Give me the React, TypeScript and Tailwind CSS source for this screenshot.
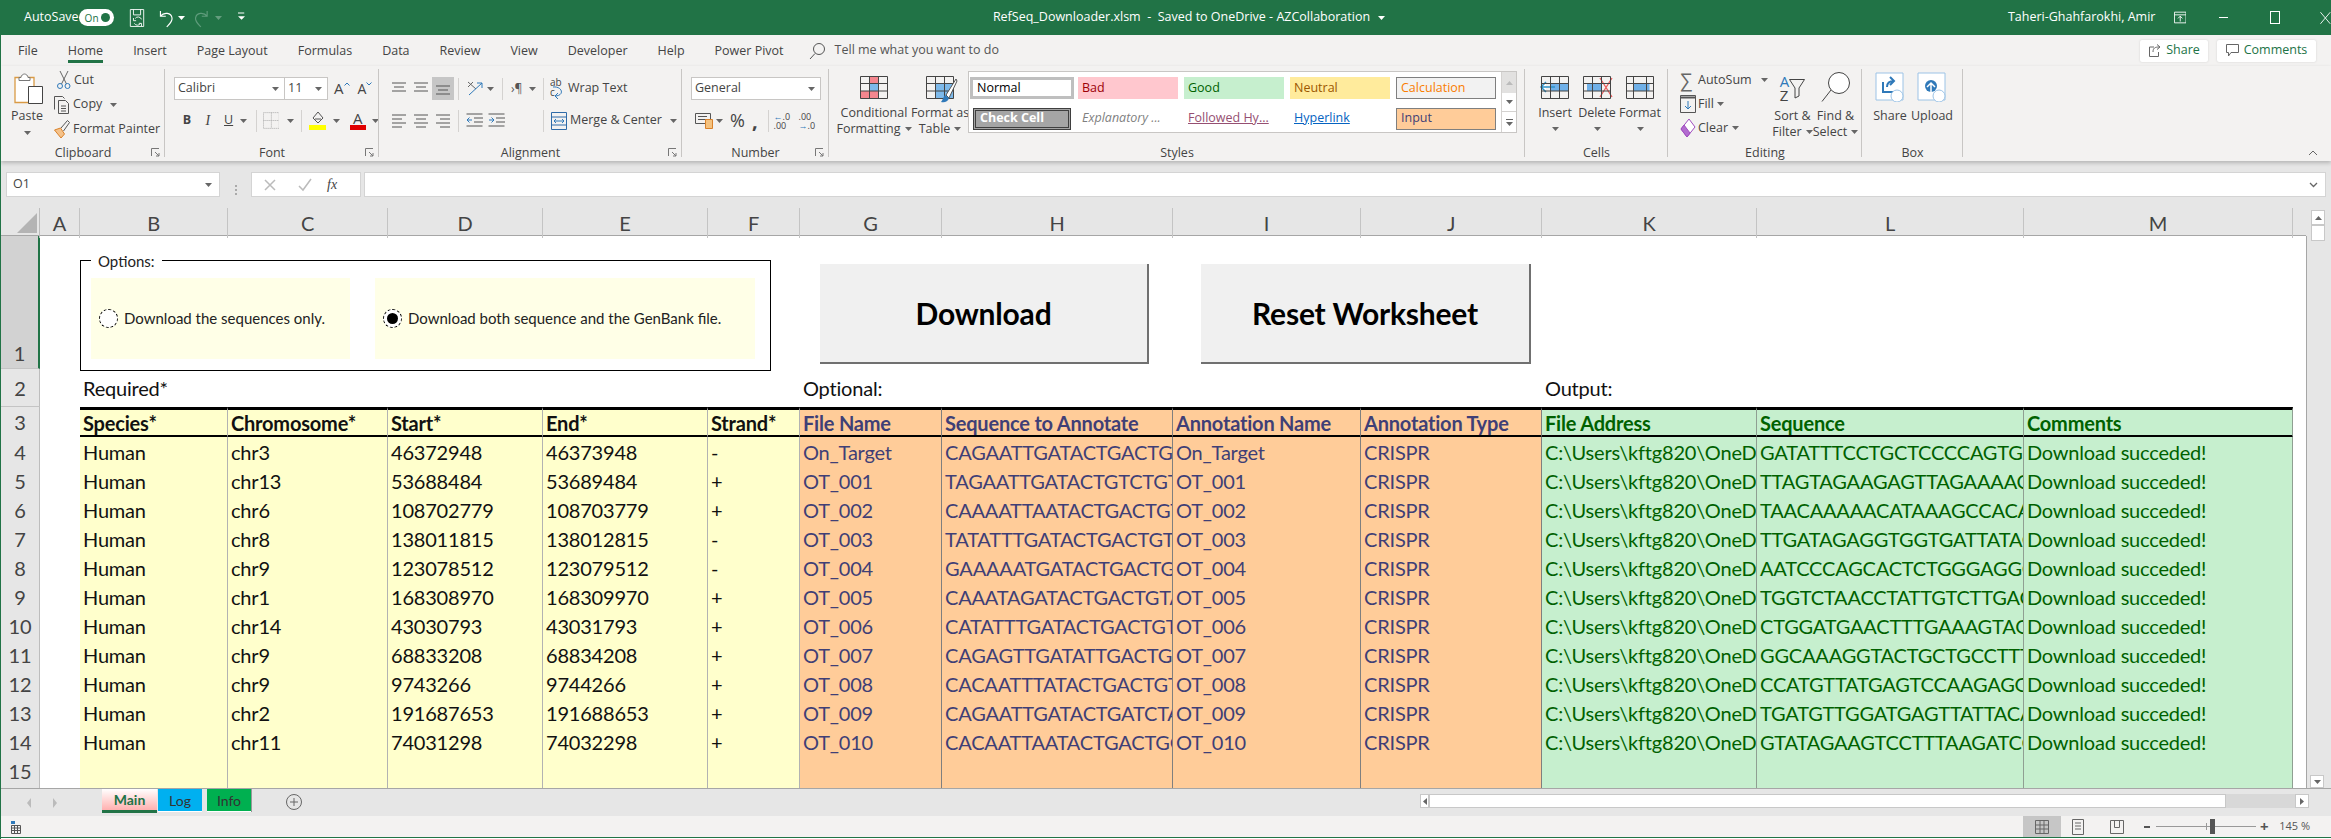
import type { ReactNode } from "react";

const gridCols =
  "grid grid-cols-[39px_40px_148px_160px_155px_165px_92px_142px_231px_188px_181px_215px_267px_269px_13px]";

const colHeaders = ["A", "B", "C", "D", "E", "F", "G", "H", "I", "J", "K", "L", "M"];

const path = "C:\\Users\\kftg820\\OneDrive\\Documents\\RefSeq";
const ok = "Download succeded!";

const rows = [
  ["chr3", "46372948", "46373948", "-", "On_Target", "CAGAATTGATACTGACTGTAG", "CRISPR", "GATATTTCCTGCTCCCCAGTGGATG"],
  ["chr13", "53688484", "53689484", "+", "OT_001", "TAGAATTGATACTGTCTGTAG", "CRISPR", "TTAGTAGAAGAGTTAGAAAACTTAA"],
  ["chr6", "108702779", "108703779", "+", "OT_002", "CAAAATTAATACTGACTGTAG", "CRISPR", "TAACAAAAACATAAAGCCACAGATT"],
  ["chr8", "138011815", "138012815", "-", "OT_003", "TATATTTGATACTGACTGTA", "CRISPR", "TTGATAGAGGTGGTGATTATAGATT"],
  ["chr9", "123078512", "123079512", "-", "OT_004", "GAAAAATGATACTGACTGTAG", "CRISPR", "AATCCCAGCACTCTGGGAGGCTGAG"],
  ["chr1", "168308970", "168309970", "+", "OT_005", "CAAATAGATACTGACTGTAGG", "CRISPR", "TGGTCTAACCTATTGTCTTGACTTT"],
  ["chr14", "43030793", "43031793", "+", "OT_006", "CATATTTGATACTGACTGTA", "CRISPR", "CTGGATGAACTTTGAAAGTAGTAAT"],
  ["chr9", "68833208", "68834208", "+", "OT_007", "CAGAGTTGATATTGACTGGAG", "CRISPR", "GGCAAAGGTACTGCTGCCTTTTAAG"],
  ["chr9", "9743266", "9744266", "+", "OT_008", "CACAATTTATACTGACTGTA", "CRISPR", "CCATGTTATGAGTCCAAGAGGGCAG"],
  ["chr2", "191687653", "191688653", "+", "OT_009", "CAGAATTGATACTGATCTAGG", "CRISPR", "TGATGTTGGATGAGTTATTACACTT"],
  ["chr11", "74031298", "74032298", "+", "OT_010", "CACAATTAATACTGACTGCA", "CRISPR", "GTATAGAAGTCCTTTAAGATCCAGT"],
];

const yellowCell = "bg-[#ffffcc] border-[#b2b2b2] text-[#111]";
const orangeCell = "bg-[#ffcc99] border-[#7f7f7f] text-[#3f3f76]";
const greenCell = "bg-[#c6efce] border-[#8f9f92] text-[#006100]";

const Caret = ({ className = "" }: { className?: string }) => (
  <svg width="7" height="4" viewBox="0 0 7 4" className={`shrink-0 ${className}`}>
    <path d="M0 0h7L3.5 4z" fill="#666" />
  </svg>
);

const Launcher = () => (
  <svg width="9" height="9" viewBox="0 0 9 9" className="absolute right-[5px] bottom-[4px]" fill="none" stroke="#777">
    <path d="M.5 8V.5H8M4 4l4 4M8 5v3H5" />
  </svg>
);

const Group = ({
  className,
  label,
  launcher,
  children,
}: {
  className: string;
  label: string;
  launcher?: boolean;
  children: ReactNode;
}) => (
  <div className={`relative flex h-full shrink-0 flex-col ${className}`}>
    <div className="flex-1">{children}</div>
    <div className="h-[16px] text-center leading-[16px]">{label}</div>
    {launcher && <Launcher />}
    <div className="absolute top-[3px] right-0 bottom-[4px] w-px bg-[#c8c6c4]" />
  </div>
);

const Sep = ({ className = "" }: { className?: string }) => (
  <div className={`h-[22px] w-px shrink-0 bg-[#d4d2d0] ${className}`} />
);

const Lines = ({ align }: { align: "top" | "middle" | "bottom" | "left" | "center" | "right" }) => {
  const p = {
    top: "M2 3h14M4 7h10M2 11h14",
    middle: "M2 6h14M4 10h10M2 14h14",
    bottom: "M2 9h14M4 13h10M2 17h14",
    left: "M2 3h14M2 7h10M2 11h14M2 15h10",
    center: "M2 3h14M4 7h10M2 11h14M4 15h10",
    right: "M2 3h14M6 7h10M2 11h14M6 15h10",
  }[align];
  return (
    <svg width="18" height="18" viewBox="0 0 18 18" className="shrink-0" fill="none" stroke="#555">
      <path d={p} />
    </svg>
  );
};

const GridIcon = ({ children }: { children?: ReactNode }) => (
  <svg width="32" height="23" viewBox="0 0 32 23" fill="none" className="shrink-0">
    {children}
    <path d="M2.500 .5h27v22h-27zM11.500 .5v22M20.500 .5v22M2.500 7.500h27M2.500 15h27" stroke="#444" />
  </svg>
);

const TallLabel = ({ line1, line2, caret }: { line1: string; line2: string; caret?: boolean }) => (
  <div className="mt-[6px] flex flex-col items-center leading-[16px] whitespace-nowrap">
    <span>{line1}</span>
    <span className="flex items-center gap-[4px]">
      {line2}
      {caret && <Caret />}
    </span>
  </div>
);

const TitleBar = () => (
  <div className="flex h-[35px] shrink-0 items-center bg-[#217346] text-[12.5px] text-white">
    <span className="ml-[23px] w-[57px]">AutoSave</span>
    <div className="flex h-[17px] w-[38px] items-center justify-between rounded-full bg-white pr-[4px] pl-[6px] text-[10px] leading-none text-[#217346]">
      On
      <span className="h-[9px] w-[9px] rounded-full bg-[#217346]" />
    </div>
    <svg width="18" height="22" viewBox="0 0 18 22" fill="none" stroke="#fff" className="ml-[15px]">
      <path d="M1.500 20.500v-19h15v19zM5 1.500v6h8v-6M14 12.500a4 4 0 0 0-7-1M5 11v3h3M6 17a4 4 0 0 0 7 0M14 20v-3h-3" />
    </svg>
    <svg width="22" height="22" viewBox="0 0 22 22" fill="none" stroke="#fff" strokeWidth="1.300" className="ml-[11px]">
      <path d="M5 3v6h6M5 9c4-5 12-4 13 2 .6 4-3 7-6 10" />
    </svg>
    <Caret className="ml-[3px] [&>path]:fill-white" />
    <svg width="22" height="22" viewBox="0 0 22 22" fill="none" stroke="#5f9c7c" strokeWidth="1.300" className="ml-[7px]">
      <path d="M17 3v6h-6M17 9C13 4 5 5 4 11c-.6 4 3 7 6 10" />
    </svg>
    <Caret className="ml-[3px] opacity-30 [&>path]:fill-white" />
    <svg width="8" height="11" viewBox="0 0 8 11" className="ml-[16px]" fill="#fff">
      <path d="M0 0h7v1H0zM0 4h8L4 8z" />
      <path d="M0 9h8v1H0z" opacity="0" />
    </svg>
    <div className="ml-[748px] flex w-[344px] items-center whitespace-pre">
      RefSeq_Downloader.xlsm  -  Saved to OneDrive - AZCollaboration
      <Caret className="ml-[8px] [&>path]:fill-white" />
    </div>
    <span className="ml-[671px] w-[134px] whitespace-nowrap">Taheri-Ghahfarokhi, Amir</span>
    <svg width="14" height="13" viewBox="0 0 14 13" fill="none" stroke="#fff" className="ml-[32px]">
      <path d="M.5 .5h13v12H.5zM.5 3.500h13M7 11V5M4.500 7.500 7 5l2.500 2.500" />
    </svg>
    <div className="ml-[33px] h-px w-[10px] bg-white" />
    <div className="ml-[42px] h-[13px] w-[11px] border border-white" />
    <svg width="12" height="14" viewBox="0 0 12 14" stroke="#fff" className="ml-[40px]">
      <path d="M.5 .5l11 13M11.500 .5l-11 13" />
    </svg>
  </div>
);

const tabs = ["File", "Home", "Insert", "Page Layout", "Formulas", "Data", "Review", "View", "Developer", "Help", "Power Pivot"];

const TabBar = () => (
  <div className="flex h-[31px] shrink-0 items-center bg-[#f3f2f1] text-[#444]">
    <div className="ml-[17px] flex items-center gap-[30px]">
      {tabs.map((t) => (
        <div key={t} className="relative whitespace-nowrap leading-[31px]">
          {t}
          {t === "Home" && <div className="absolute right-0 bottom-[3px] left-0 h-[3px] bg-[#217346]" />}
        </div>
      ))}
    </div>
    <svg width="18" height="18" viewBox="0 0 18 18" fill="none" stroke="#555" className="ml-[24px]">
      <circle cx="11" cy="7" r="5.500" />
      <path d="M7 11.500 2 17" />
    </svg>
    <span className="ml-[9px] whitespace-nowrap text-[#555]">Tell me what you want to do</span>
    <div className="ml-auto flex h-[22px] w-[68px] items-center justify-center gap-[5px] rounded-[2px] bg-white text-[#217346] shadow-[0_0_2px_#ccc]">
      <svg width="13" height="15" viewBox="0 0 13 15" fill="none" stroke="#666">
        <path d="M6 4H1.500v9.500h9V9M5 9c0-4 2-5 6-5M9 1.500 12 4 9 6.500" />
      </svg>
      Share
    </div>
    <div className="mr-[15px] ml-[9px] flex h-[22px] w-[99px] items-center justify-center gap-[5px] rounded-[2px] bg-white text-[#217346] shadow-[0_0_2px_#ccc]">
      <svg width="13" height="13" viewBox="0 0 13 13" fill="none" stroke="#666">
        <path d="M.5 .5h12v8H5L2.500 12V8.500h-2z" />
      </svg>
      Comments
    </div>
  </div>
);

const Clipboard = () => (
  <Group className="w-[164px]" label="Clipboard" launcher>
    <div className="flex">
      <div className="flex w-[52px] flex-col items-center">
        <svg width="30" height="32" viewBox="0 0 30 32" fill="none" className="mt-[7px] ml-[3px]">
          <path d="M1 4.500h19v25H1z" fill="#fff" stroke="#d99a45" strokeWidth="1.300" />
          <path d="M7 4.500c0-2 2-3.500 3.500-3.500S14 2.500 14 4.500h2v3H5v-3z" fill="#fff" stroke="#777" />
          <path d="M14.500 13.500h14v17h-14z" fill="#fff" stroke="#444" />
        </svg>
        <span className="mt-[3px] leading-[16px]">Paste</span>
        <Caret className="mt-[7px]" />
      </div>
      <div className="flex flex-col pt-[2px]">
        <div className="flex h-[24px] items-center">
          <svg width="18" height="20" viewBox="0 0 18 20" fill="none" className="ml-[2px]">
            <path d="M5 1l6.500 13M13 1 6.500 14" stroke="#666" />
            <circle cx="5" cy="16" r="2.500" stroke="#2f79b9" />
            <circle cx="12.500" cy="16" r="2.500" stroke="#2f79b9" />
          </svg>
          <span className="ml-[1px]">Cut</span>
        </div>
        <div className="flex h-[25px] items-center">
          <svg width="17" height="18" viewBox="0 0 17 18" fill="none" stroke="#555">
            <path d="M1.500 13.500v-13h8l2 2M5.500 4.500h7l3 3v10h-10z" fill="#f3f2f1" />
            <path d="M8 10h5M8 12.500h5M8 15h5" />
          </svg>
          <span className="ml-[3px]">Copy</span>
          <Caret className="ml-[8px]" />
        </div>
        <div className="flex h-[24px] items-center">
          <svg width="17" height="20" viewBox="0 0 17 20" fill="none">
            <path d="M1.500 11 8 19l3.500-4-4-6z" fill="#f5c28a" stroke="#d9822b" />
            <path d="M8 9l6.500-7.500 2 2L10.500 12" stroke="#555" />
          </svg>
          <span className="ml-[3px] whitespace-nowrap">Format Painter</span>
        </div>
      </div>
    </div>
  </Group>
);

const FontGroup = () => (
  <Group className="w-[214px]" label="Font" launcher>
    <div className="flex h-[23px] mt-[11px] pl-[9px]">
      <div className="flex w-[111px] items-center justify-between border border-[#c8c6c4] bg-white pr-[5px] pl-[3px]">
        Calibri
        <Caret />
      </div>
      <div className="flex w-[43px] items-center justify-between border border-l-0 border-[#c8c6c4] bg-white pr-[5px] pl-[3px]">
        11
        <Caret />
      </div>
      <span className="ml-[6px] text-[15px] leading-[23px]">A</span>
      <svg width="6" height="4" viewBox="0 0 6 4" className="mt-[5px]" fill="none" stroke="#2f79b9">
        <path d="M.5 3.500 3 1l2.500 2.500" />
      </svg>
      <span className="ml-[8px] text-[14px] leading-[23px]">A</span>
      <svg width="6" height="4" viewBox="0 0 6 4" className="mt-[5px]" fill="none" stroke="#2f79b9">
        <path d="M.5 .5 3 3l2.500-2.500" />
      </svg>
    </div>
    <div className="mt-[9px] flex h-[23px] items-center pl-[16px]">
      <span className="w-[12px] text-center font-bold">B</span>
      <span className="ml-[10px] w-[10px] text-center font-['Liberation_Serif'] text-[14px] italic">I</span>
      <span className="ml-[10px] w-[12px] text-center underline">U</span>
      <Caret className="ml-[5px]" />
      <Sep className="ml-[9px]" />
      <svg width="17" height="17" viewBox="0 0 17 17" fill="none" stroke="#aaa" strokeDasharray="1 1" className="ml-[6px]">
        <path d="M.5 .5h16v16H.500zM8.500 .5v16M.5 8.500h16" />
      </svg>
      <Caret className="ml-[8px]" />
      <Sep className="ml-[7px]" />
      <div className="ml-[7px] flex w-[17px] flex-col items-center">
        <svg width="14" height="14" viewBox="0 0 14 14" fill="none" stroke="#555">
          <path d="M7 1 2 7l5 5 5-5zM4 8h6" />
        </svg>
        <div className="h-[5px] w-[17px] bg-[#ffff00]" />
      </div>
      <Caret className="ml-[7px]" />
      <div className="ml-[9px] flex w-[17px] flex-col items-center leading-none">
        <span className="text-[15px] leading-[14px]">A</span>
        <div className="h-[5px] w-[16px] bg-[#e00000]" />
      </div>
      <Caret className="ml-[6px]" />
    </div>
  </Group>
);

const AlignmentGroup = () => (
  <Group className="w-[303px]" label="Alignment" launcher>
    <div className="mt-[11px] flex h-[23px] items-center pl-[11px]">
      <Lines align="top" />
      <div className="ml-[4px]"><Lines align="top" /></div>
      <div className="ml-[2px] flex h-[23px] w-[22px] items-center justify-center bg-[#c6c6c6]"><Lines align="middle" /></div>
      <Sep className="ml-[4px]" />
      <svg width="18" height="18" viewBox="0 0 18 18" fill="none" className="ml-[7px]">
        <path d="M2 2l8 7M7 2 2 7" stroke="#666" />
        <path d="M3 15 16 3M11 3h5v5" stroke="#2f79b9" />
      </svg>
      <Caret className="ml-[3px]" />
      <Sep className="ml-[8px]" />
      <span className="ml-[8px] w-[14px] text-[12px] text-[#555]">›¶</span>
      <Caret className="ml-[4px]" />
      <Sep className="ml-[7px]" />
      <svg width="16" height="22" viewBox="0 0 16 22" fill="none" className="ml-[6px]">
        <path d="M3 9c9-1 12 8 3 9M8 15l-3 3 3 3" stroke="#2f79b9" />
        <text x="0" y="8" fontSize="10" fill="#444">ab</text>
        <text x="0" y="18" fontSize="10" fill="#444">c</text>
      </svg>
      <span className="ml-[2px] whitespace-nowrap">Wrap Text</span>
    </div>
    <div className="mt-[9px] flex h-[23px] items-center pl-[11px]">
      <Lines align="left" />
      <div className="ml-[4px]"><Lines align="center" /></div>
      <div className="ml-[4px]"><Lines align="right" /></div>
      <Sep className="ml-[6px]" />
      <svg width="17" height="15" viewBox="0 0 17 15" fill="none" className="ml-[7px]">
        <path d="M.5 1h16M8 5h9M8 9h9M.5 13h16" stroke="#555" />
        <path d="M6 7H1M3.500 4.500 1 7l2.500 2.500" stroke="#2f79b9" />
      </svg>
      <svg width="17" height="15" viewBox="0 0 17 15" fill="none" className="ml-[5px]">
        <path d="M.5 1h16M8 5h9M8 9h9M.5 13h16" stroke="#555" />
        <path d="M1 7h5M3.500 4.500 6 7 3.500 9.500" stroke="#2f79b9" />
      </svg>
      <Sep className="ml-[38px]" />
      <svg width="16" height="18" viewBox="0 0 16 18" fill="none" className="ml-[7px]">
        <path d="M.5 .5h15v17H.5zM.5 5h15M.5 13h15" stroke="#2f6ba8" />
        <path d="M3 9h10M5 7 3 9l2 2M11 7l2 2-2 2" stroke="#2f79b9" />
      </svg>
      <span className="ml-[3px] whitespace-nowrap">Merge &amp; Center</span>
      <Caret className="ml-[8px]" />
    </div>
  </Group>
);

const NumberGroup = () => (
  <Group className="w-[147px]" label="Number" launcher>
    <div className="mt-[11px] ml-[9px] flex h-[23px] w-[130px] items-center justify-between border border-[#c8c6c4] bg-white pr-[5px] pl-[3px]">
      General
      <Caret />
    </div>
    <div className="mt-[9px] flex h-[23px] items-center pl-[13px]">
      <svg width="18" height="17" viewBox="0 0 18 17" fill="none">
        <path d="M.5 1.500h15v10H.5z" stroke="#555" />
        <path d="M3 4.500h9M3 7.500h9" stroke="#555" />
        <path d="M10.500 7.500h7v9h-7z" fill="#f4c27f" stroke="#d9822b" />
      </svg>
      <Caret className="ml-[3px]" />
      <span className="ml-[7px] text-[18px]">%</span>
      <span className="ml-[7px] text-[20px] leading-[16px] font-bold">,</span>
      <Sep className="ml-[10px]" />
      <div className="ml-[5px] w-[20px] text-[9px] leading-[9px] whitespace-pre">
        <span className="text-[#2f79b9]">←</span>.0{"\n"}.00
      </div>
      <div className="ml-[5px] w-[20px] text-[9px] leading-[9px] whitespace-pre">
        .00{"\n"}<span className="text-[#2f79b9]">→</span>.0
      </div>
    </div>
  </Group>
);

const styleCells = [
  { label: "Normal", cls: "bg-white text-black border-[3px] border-[#bfbfbf] w-[104px]" },
  { label: "Bad", cls: "bg-[#ffc7ce] text-[#9c0006]" },
  { label: "Good", cls: "bg-[#c6efce] text-[#006100]" },
  { label: "Neutral", cls: "bg-[#ffeb9c] text-[#9c5700]" },
  { label: "Calculation", cls: "bg-[#f2f2f2] text-[#fa7d00] border border-[#7f7f7f]" },
  { label: "Check Cell", cls: "bg-[#a5a5a5] text-white font-bold border-[3px] border-double border-[#3f3f3f] ml-[3px] w-[98px]" },
  { label: "Explanatory ...", cls: "bg-white text-[#7f7f7f] italic" },
  { label: "Followed Hy...", cls: "bg-white text-[#954f72]", link: true },
  { label: "Hyperlink", cls: "bg-white text-[#0563c1]", link: true },
  { label: "Input", cls: "bg-[#ffcc99] text-[#3f3f76] border border-[#7f7f7f]" },
];

const StylesGroup = () => (
  <Group className="w-[696px]" label="Styles">
    <div className="flex">
      <div className="flex w-[83px] shrink-0 flex-col items-center pt-[10px] pl-[7px]">
        <GridIcon>
          <path d="M11.500 0h9v7.500h-9zM2.500 15h9v8h-9zM11.500 15h9v8h-9z" fill="#f4868e" />
          <path d="M11.500 7.500h9V15h-9z" fill="#7db9ea" />
        </GridIcon>
        <TallLabel line1="Conditional" line2="Formatting" caret />
      </div>
      <div className="flex w-[56px] shrink-0 flex-col items-center pt-[10px]">
        <div className="relative">
          <GridIcon>
            <path d="M11.500 7.500h18V23h-18z" fill="#7db9ea" />
          </GridIcon>
          <svg width="18" height="26" viewBox="0 0 18 26" fill="none" className="absolute top-[2px] right-[-2px]">
            <path d="M16 1 6 17l3 3L17 3z" fill="#fff" stroke="#555" />
            <path d="M5 17l4 3c-1 4-5 5-8 4 2-2 2-5 4-7z" fill="#2f79b9" />
          </svg>
        </div>
        <TallLabel line1="Format as" line2="Table" caret />
      </div>
      <div className="mt-[5px] flex h-[62px] shrink-0 border border-[#c8c6c4] bg-white pl-[1px]">
        <div className="grid w-[531px] grid-cols-[102px_100px_100px_100px_100px] gap-x-[6px] gap-y-[6px] pt-[5px]">
          {styleCells.map((c) => (
            <div key={c.label} className={`flex h-[22px] items-center pl-[4px] whitespace-nowrap ${c.cls}`}>
              <span className={c.link ? "underline" : ""}>{c.label}</span>
            </div>
          ))}
        </div>
        <div className="flex w-[15px] flex-col border-l border-[#d4d2d0]">
          <div className="flex h-[21px] items-center justify-center bg-[#e2e1e0]">
            <svg width="7" height="4" viewBox="0 0 7 4"><path d="M0 4h7L3.500 0z" fill="#bbb" /></svg>
          </div>
          <div className="flex h-[19px] items-center justify-center border-b border-[#d4d2d0]"><Caret /></div>
          <div className="flex flex-1 flex-col items-center justify-center gap-[2px]">
            <div className="h-px w-[7px] bg-[#666]" />
            <Caret />
          </div>
        </div>
      </div>
    </div>
  </Group>
);

const CellsGroup = () => (
  <Group className="w-[143px]" label="Cells">
    <div className="flex pt-[10px] pl-[9px]">
      <div className="flex w-[42px] flex-col items-center">
        <GridIcon>
          <path d="M11.500 7.500h18V15h-18z" fill="#6fb0e8" />
          <path d="M16 11H2M7 6l-5 5 5 5" stroke="#2f93c9" strokeWidth="1.500" fill="#fff" />
        </GridIcon>
        <span className="mt-[6px] leading-[16px]">Insert</span>
        <Caret className="mt-[6px]" />
      </div>
      <div className="flex w-[42px] flex-col items-center">
        <GridIcon>
          <path d="M6 7.500h14V15H6z" fill="#6fb0e8" />
          <path d="M19 2l12 19M31 2 19 21" stroke="#ea5b5b" strokeWidth="1.300" />
        </GridIcon>
        <span className="mt-[6px] leading-[16px]">Delete</span>
        <Caret className="mt-[6px]" />
      </div>
      <div className="flex w-[44px] flex-col items-center">
        <svg width="32" height="23" viewBox="0 0 32 23" fill="none">
          <path d="M9.500 7.500h16V15h-16z" fill="#6fb0e8" />
          <path d="M2.500 .5h27v22h-27zM9.500 .5v22M22.500 .5v22M2.500 7.500h27M2.500 15h27" stroke="#444" />
        </svg>
        <span className="mt-[6px] leading-[16px]">Format</span>
        <Caret className="mt-[6px]" />
      </div>
    </div>
  </Group>
);

const EditingGroup = () => (
  <Group className="w-[194px]" label="Editing">
    <div className="flex">
      <div className="flex w-[103px] shrink-0 flex-col pt-[2px] pl-[12px]">
        <div className="flex h-[24px] items-center">
          <span className="w-[18px] text-[19px] leading-none text-[#666]">∑</span>
          <span className="whitespace-nowrap">AutoSum</span>
          <Caret className="ml-[9px]" />
        </div>
        <div className="flex h-[24px] items-center">
          <svg width="16" height="20" viewBox="0 0 16 20" fill="none" className="mr-[2px]">
            <path d="M.5 1.500h15v17H.5z" stroke="#555" />
            <path d="M.5 3.500h15" stroke="#555" strokeWidth="2" />
            <path d="M8 7v8M5 12l3 3 3-3" stroke="#2f79b9" />
          </svg>
          <span>Fill</span>
          <Caret className="ml-[3px]" />
        </div>
        <div className="flex h-[24px] items-center">
          <svg width="16" height="20" viewBox="0 0 16 20" fill="none" className="mr-[2px]">
            <path d="M1 11 9 1l6 8-8 10z" fill="#fff" stroke="#a04cc0" />
            <path d="M1 11l3-4 6 8-3 4z" fill="#b26ccf" stroke="#a04cc0" />
          </svg>
          <span>Clear</span>
          <Caret className="ml-[4px]" />
        </div>
      </div>
      <div className="flex w-[43px] shrink-0 flex-col items-center pt-[6px]">
        <div className="flex h-[30px] items-end">
          <div className="flex flex-col text-[15px] leading-[14px]">
            <span className="text-[#2f79b9]">A</span>
            <span className="text-[#444]">Z</span>
          </div>
          <svg width="16" height="20" viewBox="0 0 16 20" fill="none" stroke="#444" className="mb-[3px]">
            <path d="M.5 .5h15L10 9v8l-4 2V9z" />
          </svg>
        </div>
        <TallLabel line1="Sort &" line2="Filter" caret />
      </div>
      <div className="flex w-[43px] shrink-0 flex-col items-center pt-[6px]">
        <svg width="30" height="30" viewBox="0 0 30 30" fill="none" stroke="#444">
          <circle cx="18" cy="11" r="10.500" fill="#fff" />
          <path d="M10 18 1 29.500" />
        </svg>
        <TallLabel line1="Find &" line2="Select" caret />
      </div>
    </div>
  </Group>
);

const BoxGroup = () => (
  <Group className="w-[101px]" label="Box">
    <div className="flex pt-[6px] pl-[7px]">
      <div className="flex w-[42px] flex-col items-center">
        <svg width="30" height="30" viewBox="0 0 30 30" fill="none">
          <path d="M1 1h27v27H1z" fill="#fff" stroke="#9cc3e6" />
          <path d="M8 10v10h10M12 15c0-5 3-6 7-6M15 5l4 4-4 4" stroke="#2f79b9" strokeWidth="2" />
          <circle cx="22" cy="24" r="6" fill="#fff" stroke="#9cc3e6" />
        </svg>
        <TallLabel line1="Share" line2=" " />
      </div>
      <div className="flex w-[42px] flex-col items-center">
        <svg width="30" height="30" viewBox="0 0 30 30" fill="none">
          <path d="M1 1h27v27H1z" fill="#fff" stroke="#9cc3e6" />
          <circle cx="14" cy="14" r="6" fill="#2f79b9" />
          <path d="M14 22V12M10 15l4-4 4 4" stroke="#fff" strokeWidth="1.500" />
          <circle cx="22" cy="24" r="6" fill="#fff" stroke="#9cc3e6" />
        </svg>
        <TallLabel line1="Upload" line2=" " />
      </div>
    </div>
  </Group>
);

const Ribbon = () => (
  <div className="relative z-10 flex h-[95px] shrink-0 bg-[#f3f2f1] text-[#444] shadow-[0_2px_4px_rgba(0,0,0,0.22)]">
    <Clipboard />
    <FontGroup />
    <AlignmentGroup />
    <NumberGroup />
    <StylesGroup />
    <CellsGroup />
    <EditingGroup />
    <BoxGroup />
    <svg width="10" height="6" viewBox="0 0 10 6" fill="none" stroke="#666" className="absolute right-[13px] bottom-[5px]">
      <path d="M1 5l4-4 4 4" />
    </svg>
  </div>
);

const FormulaBar = () => (
  <div className="flex h-[47px] shrink-0 bg-[#e6e6e6] pt-[11px] text-[#444]">
    <div className="ml-[5px] flex h-[25px] w-[214px] items-center justify-between border border-[#d4d4d4] bg-white pr-[7px] pl-[6px]">
      O1
      <Caret />
    </div>
    <div className="ml-[15px] flex w-[2px] flex-col items-center justify-center gap-[2px]">
      <span className="h-[2px] w-[2px] bg-[#aaa]" />
      <span className="h-[2px] w-[2px] bg-[#aaa]" />
      <span className="h-[2px] w-[2px] bg-[#aaa]" />
    </div>
    <div className="ml-[14px] flex h-[25px] w-[110px] items-center border border-[#d4d4d4] bg-white pl-[11px]">
      <svg width="14" height="14" viewBox="0 0 14 14" stroke="#bbb" strokeWidth="1.500">
        <path d="M2 2l10 10M12 2 2 12" />
      </svg>
      <svg width="16" height="14" viewBox="0 0 16 14" fill="none" stroke="#bbb" strokeWidth="1.500" className="ml-[20px]">
        <path d="M2 8l4 4 8-11" />
      </svg>
      <span className="ml-[14px] font-['Liberation_Serif'] text-[14px] italic">fx</span>
    </div>
    <div className="mr-[5px] ml-[3px] flex h-[25px] flex-1 items-center justify-end border border-[#d4d4d4] bg-white pr-[7px]">
      <svg width="9" height="6" viewBox="0 0 9 6" fill="none" stroke="#666" strokeWidth="1.300">
        <path d="M1 1l3.500 3.500L8 1" />
      </svg>
    </div>
  </div>
);

const ColumnHeader = () => (
  <div className={`${gridCols} h-[28px] shrink-0 border-b border-[#a6a6a6] bg-[#e6e6e6] text-[#444]`}>
    <div className="relative border-r border-[#bdbdbd]">
      <div className="absolute top-[5px] right-[2px] h-0 w-0 border-t-[20px] border-l-[20px] border-t-transparent border-l-transparent border-b-0 border-r-[20px] border-r-[#b4b4b4]" />
    </div>
    {colHeaders.map((c) => (
      <div key={c} className="flex items-center justify-center border-r border-[#c4c4c4]">
        {c}
      </div>
    ))}
    <div />
  </div>
);

const RowHead = ({ n, selected }: { n: number; selected?: boolean }) => (
  <div
    className={`flex justify-center border-b border-[#c4c4c4] text-[#444] ${
      selected
        ? "items-end border-r-2 border-r-[#217346] bg-[#d2d2d2]"
        : "items-center border-r border-r-[#bdbdbd] bg-[#e6e6e6]"
    }`}
  >
    {n}
  </div>
);

const OptionPanel = ({
  className,
  checked,
  label,
}: {
  className: string;
  checked?: boolean;
  label: string;
}) => (
  <div className={`flex h-[81px] items-center bg-[#ffffe7] pl-[8px] ${className}`}>
    <span className="flex h-[19px] w-[19px] shrink-0 items-center justify-center rounded-full border border-dashed border-black bg-white">
      {checked && <span className="h-[11px] w-[11px] rounded-full bg-black" />}
    </span>
    <span className="ml-[6px] text-[15px] whitespace-nowrap text-[#222]">{label}</span>
  </div>
);

const SheetButton = ({ className, label }: { className: string; label: string }) => (
  <button
    className={`flex h-[100px] items-center justify-center border-r-2 border-b-2 border-[#707070] bg-[#f0f0f0] text-[30px] font-bold text-black ${className}`}
  >
    {label}
  </button>
);

const Sheet = () => (
  <div className="flex w-[2305px] shrink-0 flex-col font-['Lato',sans-serif] text-[20px] tracking-[-0.2px]">
    <ColumnHeader />
    {/* row 1 holds the floating form controls */}
    <div className="flex h-[133px]">
      <div className="w-[39px] shrink-0 flex">
        <div className="flex-1 grid">
          <RowHead n={1} selected />
        </div>
      </div>
      <div className="relative mt-[24px] ml-[40px] flex h-[111px] w-[691px] shrink-0 gap-[25px] border border-black pt-[17px] pl-[10px] font-['Lato',sans-serif] tracking-normal">
        <span className="absolute top-[-9px] left-[10px] bg-white px-[7px] text-[15px] leading-[18px] text-[#222]">
          Options:
        </span>
        <OptionPanel className="w-[259px]" label="Download the sequences only." />
        <OptionPanel className="w-[380px]" checked label="Download both sequence and the GenBank file." />
      </div>
      <SheetButton className="mt-[28px] ml-[49px] w-[329px]" label="Download" />
      <SheetButton className="mt-[28px] ml-[52px] w-[330px]" label="Reset Worksheet" />
    </div>
    <div className={`${gridCols} h-[38px]`}>
      <RowHead n={2} />
      <div />
      <div className="col-span-5 flex items-center pl-[3px] text-[#111]">Required*</div>
      <div className="col-span-4 flex items-center pl-[3px] text-[#111]">Optional:</div>
      <div className="col-span-3 flex items-center pl-[3px] text-[#111]">Output:</div>
      <div />
    </div>
    <div className={`${gridCols} h-[30px]`}>
      <RowHead n={3} />
      <div />
      {["Species*", "Chromosome*", "Start*", "End*", "Strand*"].map((t) => (
        <HeadCell key={t} tone={yellowCell} text={t} />
      ))}
      {["File Name", "Sequence to Annotate", "Annotation Name", "Annotation Type"].map((t) => (
        <HeadCell key={t} tone={orangeCell} text={t} />
      ))}
      {["File Address", "Sequence", "Comments"].map((t) => (
        <HeadCell key={t} tone={greenCell} text={t} />
      ))}
      <div />
    </div>
    {rows.map((r, i) => (
      <DataRow key={i} n={i + 4} r={r} />
    ))}
    <DataRow n={15} />
    <div className={`${gridCols} h-[3px]`}>
      <div className="border-r border-[#bdbdbd] bg-[#e6e6e6]" />
      <div />
      {[yellowCell, yellowCell, yellowCell, yellowCell, yellowCell, orangeCell, orangeCell, orangeCell, orangeCell, greenCell, greenCell, greenCell].map((t, i) => (
        <div key={i} className={`border-r ${t}`} />
      ))}
      <div />
    </div>
  </div>
);

const HeadCell = ({ tone, text }: { tone: string; text: string }) => (
  <div className={`flex items-center overflow-hidden border-y-[3px] border-r border-y-black pl-[3px] font-bold whitespace-nowrap ${tone}`}>
    {text}
  </div>
);

const Cell = ({ tone, text }: { tone: string; text?: string }) => (
  <div className={`flex items-center overflow-hidden border-r border-b pl-[3px] whitespace-nowrap ${tone}`}>
    {text}
  </div>
);

const DataRow = ({ n, r }: { n: number; r?: string[] }) => (
  <div className={`${gridCols} h-[29px]`}>
    <RowHead n={n} />
    <div />
    <Cell tone={yellowCell} text={r && "Human"} />
    <Cell tone={yellowCell} text={r?.[0]} />
    <Cell tone={yellowCell} text={r?.[1]} />
    <Cell tone={yellowCell} text={r?.[2]} />
    <Cell tone={yellowCell} text={r?.[3]} />
    <Cell tone={orangeCell} text={r?.[4]} />
    <Cell tone={orangeCell} text={r?.[5]} />
    <Cell tone={orangeCell} text={r?.[4]} />
    <Cell tone={orangeCell} text={r?.[6]} />
    <Cell tone={greenCell} text={r && path} />
    <Cell tone={greenCell} text={r?.[7]} />
    <Cell tone={greenCell} text={r && ok} />
    <div />
  </div>
);

const VScroll = () => (
  <div className="flex w-[25px] shrink-0 flex-col bg-[#e6e6e6]">
    <div className="h-[28px] shrink-0 border-l border-transparent pt-[2px] pl-[4px]">
      <div className="flex h-[15px] w-[14px] items-center justify-center border border-[#c8c8c8] bg-white">
        <svg width="7" height="4" viewBox="0 0 7 4"><path d="M0 4h7L3.500 0z" fill="#666" /></svg>
      </div>
      <div className="h-[16px] w-[14px] border border-[#c8c8c8] bg-white" />
    </div>
    <div className="flex flex-1 flex-col justify-end border-l border-[#a6a6a6] pl-[3px]">
      <div className="flex h-[13px] w-[14px] items-center justify-center border border-[#c8c8c8] bg-white">
        <Caret />
      </div>
    </div>
  </div>
);

const SheetTabs = () => (
  <div className="flex h-[28px] shrink-0 border-t border-[#a6a6a6] bg-[#e6e6e6] font-['Lato',sans-serif] text-[#333]">
    <svg width="30" height="10" viewBox="0 0 30 10" className="mt-[9px] ml-[26px]" fill="#bbb">
      <path d="M4 0v10L0 5zM26 0v10l4-5z" />
    </svg>
    <div className="ml-[45px] flex h-[24px] w-[55px] items-center justify-center border-b-[3px] border-[#217346] bg-gradient-to-b from-white to-[#ffb0b0] text-[14px] font-bold text-[#217346]">
      Main
    </div>
    <div className="ml-px flex h-[23px] w-[44px] items-center justify-center border-b border-white bg-[#00b0f0] text-[14px]">
      Log
    </div>
    <div className="ml-[5px] flex h-[23px] w-[44px] items-center justify-center border-b border-white bg-[#00b050] text-[14px]">
      Info
    </div>
    <div className="h-[23px] w-px bg-[#999]" />
    <svg width="16" height="16" viewBox="0 0 16 16" fill="none" stroke="#666" className="mt-[5px] ml-[34px]">
      <circle cx="8" cy="8" r="7.500" />
      <path d="M8 4v8M4 8h8" />
    </svg>
    <div className="ml-auto flex items-start pt-[5px]">
      <div className="flex h-[14px] w-[9px] items-center justify-center border border-[#c8c8c8] bg-white">
        <svg width="4" height="7" viewBox="0 0 4 7"><path d="M4 0v7L0 3.500z" fill="#666" /></svg>
      </div>
      <div className="h-[14px] w-[797px] border border-[#c8c8c8] bg-white" />
      <div className="h-[14px] w-[69px] bg-[#d8d8d8]" />
      <div className="flex h-[14px] w-[14px] items-center justify-center border border-[#c8c8c8] bg-white">
        <svg width="4" height="7" viewBox="0 0 4 7"><path d="M0 0v7l4-3.500z" fill="#666" /></svg>
      </div>
      <div className="w-[22px]" />
    </div>
  </div>
);

const StatusBar = () => (
  <div className="flex h-[22px] shrink-0 items-center border-b border-[#217346] bg-[#f3f2f1] text-[11px] text-[#555]">
    <svg width="12" height="14" viewBox="0 0 12 14" fill="none" stroke="#555" className="ml-[9px]">
      <path d="M1 1h4v3H1z" fill="#2f79b9" stroke="none" />
      <path d="M1.500 5.500h9v8h-9zM1.500 8h9M1.500 10.500h9M4.500 5.500v8M7.500 5.500v8" />
    </svg>
    <div className="ml-auto flex h-full w-[38px] items-center justify-center bg-[#c6c6c6]">
      <svg width="14" height="14" viewBox="0 0 14 14" fill="none" stroke="#666">
        <path d="M.5 .5h13v13H.5zM5 .5v13M9 .5v13M.5 5h13M.5 9h13" />
      </svg>
    </div>
    <svg width="12" height="16" viewBox="0 0 12 16" fill="none" stroke="#666" className="ml-[11px]">
      <path d="M.5 .5h11v15H.5zM3 4h6M3 7h6M3 10h6" />
    </svg>
    <svg width="14" height="14" viewBox="0 0 14 14" fill="none" stroke="#666" className="ml-[26px]">
      <path d="M.5 .5h13v13H.5zM4.500 .5v7h5v-7" />
    </svg>
    <div className="ml-[20px] h-[2px] w-[6px] bg-[#555]" />
    <div className="relative ml-[6px] h-px w-[100px] bg-[#999]">
      <div className="absolute top-[-7px] left-[54px] h-[15px] w-[5px] bg-[#555]" />
      <div className="absolute top-[-3px] left-[50px] h-[7px] w-px bg-[#999]" />
    </div>
    <span className="ml-[2px] w-[12px] text-center text-[15px] leading-none font-bold">+</span>
    <span className="mr-[21px] ml-[9px] whitespace-nowrap">145 %</span>
  </div>
);

export default function App() {
  return (
    <div className="flex h-[839px] w-[2331px] flex-col overflow-hidden border-l border-[#217346] bg-white font-['Open_Sans',sans-serif] text-[12.5px]">
      <TitleBar />
      <TabBar />
      <Ribbon />
      <FormulaBar />
      <div className="flex h-[580px] shrink-0 overflow-hidden">
        <Sheet />
        <VScroll />
      </div>
      <SheetTabs />
      <StatusBar />
    </div>
  );
}
